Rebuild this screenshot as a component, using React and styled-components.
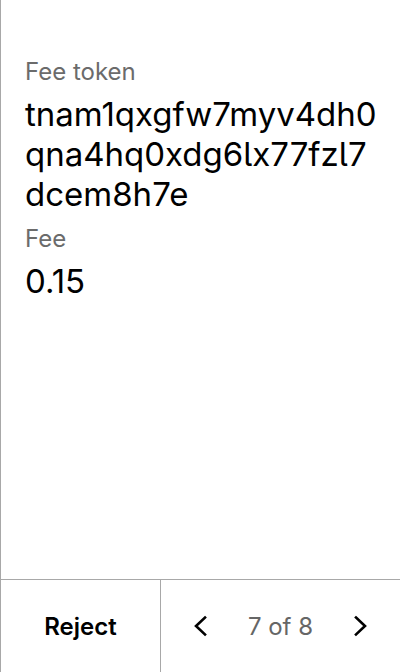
import React from 'react';
import styled, { createGlobalStyle } from 'styled-components';

const Global = createGlobalStyle`
  html, body { margin: 0; padding: 0; background: #fff; }
  body { font-family: Inter, "Noto Sans", sans-serif; font-feature-settings: "cv05" 1; }
`

const Screen = styled.div`
  width: 400px;
  height: 672px;
  box-sizing: border-box;
  border-left: 1px solid #a8a8a8;
  display: flex;
  flex-direction: column;
`
const Body = styled.div`
  flex: 1;
  padding: 58px 24px 0 24px;
`
const Label = styled.div`
  font-size: 24px;
  line-height: 28px;
  color: #6b6b6b;
  margin-bottom: 8px;
`
const Value = styled.div`
  font-size: 33px;
  line-height: 40px;
  color: #000;
  white-space: nowrap;
  margin-bottom: 11px;
`
const Footer = styled.div`
  height: 92px;
  border-top: 1px solid #a8a8a8;
  display: flex;
`
const RejectButton = styled.div`
  width: 159px;
  border-right: 1px solid #a8a8a8;
  display: flex;
  align-items: center;
  justify-content: center;
  font-size: 24px;
  font-weight: 600;
  color: #000;
`
const Pager = styled.div`
  flex: 1;
  display: flex;
  align-items: center;
  justify-content: space-between;
  padding: 0 30px 0 30px;
`
const PageText = styled.span`
  font-size: 24px;
  color: #666;
`
const Chevron = ({ dir }) => (
  <svg width="20" height="24" viewBox="0 0 20 24" fill="none" stroke="#000" strokeWidth="2.6" strokeLinecap="square">
    {dir === 'left'
      ? <polyline points="14,3.5 5,12 14,20.5" />
      : <polyline points="6,3.5 15,12 6,20.5" />}
  </svg>
)

export default function App() {
  return (
    <Screen>
      <Global />
      <Body>
        <Label>Fee token</Label>
        <Value>
          tnam1qxgfw7myv4dh0<br />qna4hq0xdg6lx77fzl7<br />dcem8h7e
        </Value>
        <Label>Fee</Label>
        <Value>0.15</Value>
      </Body>
      <Footer>
        <RejectButton>Reject</RejectButton>
        <Pager>
          <Chevron dir="left" />
          <PageText>7 of 8</PageText>
          <Chevron dir="right" />
        </Pager>
      </Footer>
    </Screen>
  );
}
